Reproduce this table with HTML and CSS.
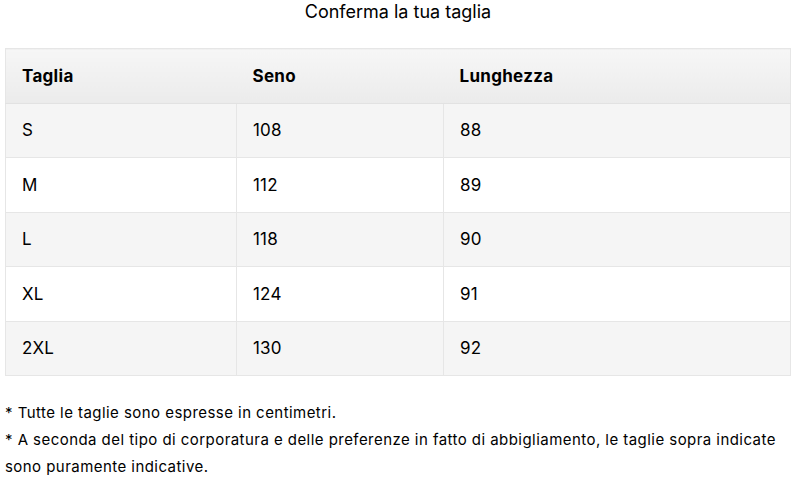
FILE: index.html
```html
<!DOCTYPE html>
<html lang="it">
<head>
<meta charset="utf-8">
<link rel="stylesheet" href="styles.css">
</head>
<body>
<div class="page">
  <h2 class="title">Conferma la tua taglia</h2>
  <table class="size-table">
    <thead>
      <tr><th>Taglia</th><th>Seno</th><th>Lunghezza</th></tr>
    </thead>
    <tbody>
      <tr><td>S</td><td>108</td><td>88</td></tr>
      <tr><td>M</td><td>112</td><td>89</td></tr>
      <tr><td>L</td><td>118</td><td>90</td></tr>
      <tr><td>XL</td><td>124</td><td>91</td></tr>
      <tr><td>2XL</td><td>130</td><td>92</td></tr>
    </tbody>
  </table>
  <div class="notes">
    <p>* Tutte le taglie sono espresse in centimetri.</p>
    <p>* A seconda del tipo di corporatura e delle preferenze in fatto di abbigliamento, le taglie sopra indicate sono puramente indicative.</p>
  </div>
</div>
</body>
</html>
```
FILE: styles.css
```css
html, body {
  margin: 0;
  padding: 0;
  background: #fff;
}
body {
  font-family: Inter, "Noto Sans", sans-serif;
  color: #000;
}
.page {
  padding: 0 9px 0 5px;
}
.title {
  margin: 0;
  padding-top: 1px;
  height: 47px;
  text-align: center;
  font-size: 18px;
  font-weight: 400;
  line-height: 22px;
}
.size-table {
  width: 100%;
  border-collapse: collapse;
  border: 1px solid #e6e6e6;
  font-size: 17px;
  letter-spacing: 0.2px;
}
.size-table th,
.size-table td {
  text-align: left;
  padding: 0 16px;
  height: 53.5px;
}
.size-table th {
  font-weight: 700;
  letter-spacing: 0.3px;
  background: linear-gradient(#f6f6f6, #ebebeb);
  border-bottom: 1px solid #e2e2e2;
}
.size-table td {
  border: 1px solid #e6e6e6;
}
.size-table th:nth-child(1), .size-table td:nth-child(1) { width: 198px; }
.size-table th:nth-child(2), .size-table td:nth-child(2) { width: 174px; }
.size-table tbody tr:nth-child(odd) { background: #f5f5f5; }
.size-table tbody tr:nth-child(even) { background: #fff; }
.notes {
  margin-top: 23px;
  font-size: 15px;
  font-weight: 400;
  letter-spacing: 0.45px;
  line-height: 27px;
}
.notes p {
  margin: 0;
}
```
